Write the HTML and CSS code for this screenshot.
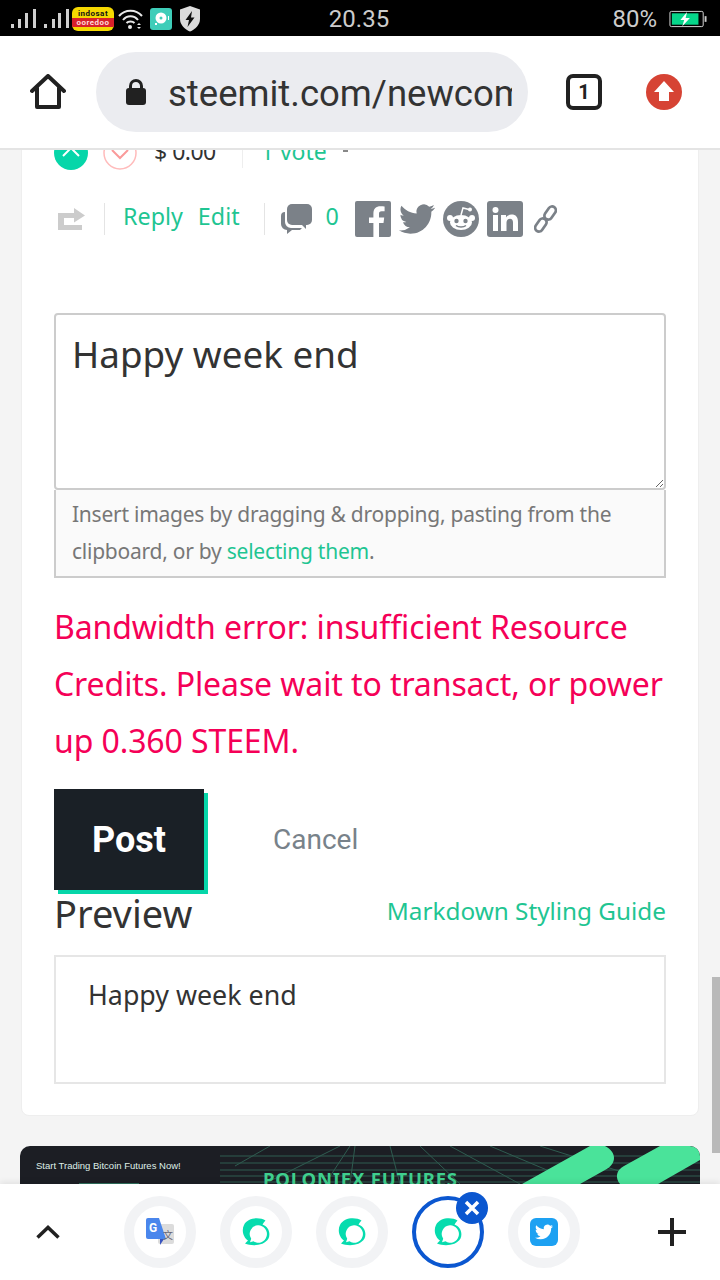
FILE: index.html
```html
<!DOCTYPE html>
<html lang="en">
<head>
    <meta charset="UTF-8">
    <meta name="viewport" content="width=device-width, initial-scale=1.0">
    <title>Steemit comment</title>
    <link rel="stylesheet" href="styles.css">
</head>
<body>
    <svg class="defs" width="0" height="0">
        <symbol id="steem" viewBox="0 0 28 28">
            <path fill="#06dcae" d="M23.500 2.500C18-1 6-1 2 7c-3 6 0 13 4 15.500L3 25.500C10 28.500 22 28 26.500 20.500C29 14.500 26 8.500 20.500 6.500C21.500 5 22.500 3.500 23.500 2.500Z"/>
            <path fill="#fff" transform="translate(.5 .8)" d="M15.500 6.500a8.700 8.700 0 1 1-4.500 16L7.500 23.500L8.700 20a8.700 8.700 0 0 1 6.800-13.500Z"/>
        </symbol>
    </svg>

    <div class="page">
        <div class="statusbar">
            <div class="status-left">
                <svg class="signal" width="62" height="19" viewBox="0 0 62 19" fill="#cfcfcf">
                    <rect x="0" y="15" width="3" height="4"/><rect x="7" y="10" width="3" height="9"/><rect x="14" y="4" width="3" height="15"/><rect x="22" y="0" width="3" height="19"/>
                    <rect x="33" y="15" width="3" height="4"/><rect x="41" y="10" width="3" height="9"/><rect x="47" y="4" width="3" height="15"/><rect x="55" y="0" width="3" height="19"/>
                </svg>
                <div class="operator">
                    <span class="op-top">indosat</span>
                    <span class="op-bottom">ooredoo</span>
                </div>
                <svg width="25" height="22" viewBox="0 0 25 22" fill="none" stroke="#e8e8e8" stroke-width="2">
                    <path d="M1 8C7 1 18 1 24 8"/><path d="M5 12C9 7 16 7 20 12"/><path d="M8.500 15C10.500 13 14.500 13 16.500 15"/>
                    <circle cx="12" cy="19" r="2" fill="#e8e8e8" stroke="none"/>
                    <path d="M21 15l2 2h-4zM21 21l2-2h-4z" fill="#e8e8e8" stroke="none"/>
                </svg>
                <svg width="22" height="22" viewBox="0 0 22 22">
                    <rect width="22" height="22" rx="3" fill="#3ecdb9"/>
                    <circle cx="11" cy="10" r="5.500" fill="#fff"/>
                    <circle cx="11" cy="10" r="1.500" fill="#3ecdb9"/>
                    <rect x="5" y="15" width="2" height="2" fill="#fff"/>
                    <rect x="18" y="8" width="1" height="4" fill="#fff"/>
                </svg>
                <svg width="22" height="26" viewBox="0 0 22 26">
                    <path fill="#dcdcdc" d="M11 0L21 3.500V13C21 19 16 23.500 11 25.500C6 23.500 1 19 1 13V3.500Z"/>
                    <path fill="#111" d="M13 5L6.500 14H10L8.500 21L15.500 11.500H12Z"/>
                </svg>
            </div>
            <div class="status-time">20.35</div>
            <div class="status-right">
                <span class="battery-text">80%</span>
                <svg width="38" height="18" viewBox="0 0 40 18">
                    <rect x="1" y="1" width="35" height="16" rx="1.500" fill="none" stroke="#ddd"/>
                    <rect x="3" y="3" width="28" height="12" fill="#06d68a"/>
                    <rect x="37.500" y="6" width="2" height="6" fill="#ccc"/>
                    <path fill="#fff" d="M19 1.500L12 10H16L14 16.500L22 8H17.500Z"/>
                </svg>
            </div>
        </div>

        <div class="toolbar">
            <svg class="tool-icon" width="36" height="36" viewBox="0 0 36 36" fill="none" stroke="#212121" stroke-width="4" stroke-linejoin="round" stroke-linecap="round">
                <path d="M2 17L18 2L34 17"/>
                <path d="M7 14V33H29V14"/>
            </svg>
            <div class="omnibox">
                <svg width="20" height="26" viewBox="0 0 20 26">
                    <path fill="none" stroke="#212121" stroke-width="3" d="M4.500 11V7a5.500 5.500 0 0 1 11 0v4"/>
                    <rect y="9" width="20" height="17" rx="3" fill="#212121"/>
                </svg>
                <div class="url">steemit.com/newcomer</div>
            </div>
            <div class="tab-count">1</div>
            <svg class="tool-icon" width="36" height="36" viewBox="0 0 36 36">
                <circle cx="18" cy="18" r="18" fill="#d64334"/>
                <path fill="#fff" d="M18 7L28 18H23V27H13V18H8Z"/>
            </svg>
        </div>

        <div class="main">
            <div class="card">
                <div class="vote-row">
                    <svg width="34" height="34" viewBox="0 0 34 34">
                        <circle cx="17" cy="17" r="17" fill="#06d6a9"/>
                        <path d="M9 20L17 12L25 20" fill="none" stroke="#fff" stroke-width="2"/>
                    </svg>
                    <svg class="vote-down" width="34" height="34" viewBox="0 0 34 34">
                        <circle cx="17" cy="17" r="16" fill="#fff" stroke="#fbb" stroke-width="1.500"/>
                        <path d="M9 14L17 22L25 14" fill="none" stroke="#fa9a9a" stroke-width="2"/>
                    </svg>
                    <span class="payout">$ 0.00</span>
                    <span class="vote-line"></span>
                    <span class="votes">1 vote</span>
                    <span class="caret"></span>
                </div>

                <div class="action-row">
                    <svg class="retweet" width="28" height="22" viewBox="0 0 28 22" fill="#ccc">
                        <path d="M0 5H16V0L27 7.500L16 14.500V10H6V17H24V22H0Z"/>
                    </svg>
                    <span class="sep sep-one"></span>
                    <a class="link reply">Reply</a>
                    <a class="link edit">Edit</a>
                    <span class="sep sep-two"></span>
                    <svg width="32" height="30" viewBox="0 0 32 30" fill="#7b8188">
                        <rect x="6" y="0" width="25" height="21" rx="5"/>
                        <path d="M20 20L25 25V20Z"/>
                        <path d="M4 8v10a6 6 0 0 0 6 6h11l-2 2h-8l-5 4v-4a6 6 0 0 1-6-6v-8a4 4 0 0 1 4-4Z"/>
                    </svg>
                    <span class="link count">0</span>
                    <div class="share">
                        <svg width="36" height="36" viewBox="0 0 36 36">
                            <rect width="36" height="36" rx="2" fill="#7b8188"/>
                            <path fill="#fff" d="M24 36V22h4.500l.7-5.500H24V13c0-1.600.5-2.700 2.700-2.700h2.900V5.400c-.5 0-2.200-.2-4.200-.2-4.200 0-7 2.500-7 7.200v4.100H14V22h4.400v14z"/>
                        </svg>
                        <svg width="36" height="36" viewBox="0 0 24 24" fill="#7b8188">
                            <path d="M23.953 4.570a10 10 0 01-2.825.775 4.958 4.958 0 002.163-2.723c-.951.555-2.005.959-3.127 1.184a4.920 4.920 0 00-8.384 4.482C7.690 8.095 4.067 6.130 1.640 3.162a4.822 4.822 0 00-.666 2.475c0 1.710.870 3.213 2.188 4.096a4.904 4.904 0 01-2.228-.616v.060a4.923 4.923 0 003.946 4.827 4.996 4.996 0 01-2.212.085 4.936 4.936 0 004.604 3.417 9.867 9.867 0 01-6.102 2.105c-.390 0-.779-.023-1.170-.067a13.995 13.995 0 007.557 2.209c9.053 0 13.998-7.496 13.998-13.985 0-.210 0-.420-.015-.630A9.935 9.935 0 0024 4.590z"/>
                        </svg>
                        <svg width="36" height="36" viewBox="0 0 36 36">
                            <circle cx="18" cy="18" r="18" fill="#7b8188"/>
                            <ellipse cx="18" cy="21.500" rx="11" ry="7.500" fill="#fff"/>
                            <circle cx="7" cy="17" r="3" fill="#fff"/>
                            <circle cx="29" cy="17" r="3" fill="#fff"/>
                            <path d="M18 14L20 7L26 8.500" fill="none" stroke="#fff" stroke-width="1.500"/>
                            <circle cx="27" cy="8.500" r="2" fill="#fff"/>
                            <circle cx="13.500" cy="20" r="2.200" fill="#7b8188"/>
                            <circle cx="22.500" cy="20" r="2.200" fill="#7b8188"/>
                            <path d="M13 24.500C15.500 26.500 20.500 26.500 23 24.500" fill="none" stroke="#7b8188" stroke-width="1.500"/>
                        </svg>
                        <svg width="36" height="36" viewBox="0 0 36 36">
                            <rect width="36" height="36" rx="3" fill="#7b8188"/>
                            <circle cx="8.500" cy="9" r="3" fill="#fff"/>
                            <rect x="6" y="14" width="5" height="16" fill="#fff"/>
                            <path fill="#fff" d="M14 14h5v2.500c1-1.800 3-3 5.500-3c4.500 0 6.500 2.500 6.500 7.500v9h-5v-8.500c0-2.500-1-3.800-3-3.800s-3.500 1.400-3.500 3.800V30h-5.500Z"/>
                        </svg>
                        <svg class="chain" width="23" height="28" viewBox="0 0 24 28" fill="none" stroke="#7b8188" stroke-width="2.800">
                            <rect x="-4" y="-9" width="8" height="15" rx="4" transform="translate(16 9) rotate(35)"/>
                            <rect x="-4" y="-6" width="8" height="15" rx="4" transform="translate(8 19) rotate(35)"/>
                        </svg>
                    </div>
                </div>

                <textarea class="editor">Happy week end</textarea>
                <div class="dropzone">
                    Insert images by dragging &amp; dropping, pasting from the clipboard, or by <a class="link">selecting them</a>.
                </div>

                <div class="error">Bandwidth error: insufficient Resource Credits. Please wait to transact, or power up 0.360 STEEM.</div>

                <div class="buttons">
                    <button class="post">Post</button>
                    <button class="cancel">Cancel</button>
                </div>

                <div class="preview-head">
                    <h4>Preview</h4>
                    <a class="link guide">Markdown Styling Guide</a>
                </div>
                <div class="preview-box">Happy week end</div>
            </div>

            <div class="banner">
                <svg class="banner-art" width="680" height="100" viewBox="0 0 680 100">
                    <g stroke="#2f5c50" stroke-width="1" fill="none">
                        <path d="M215 20L250 0M250 35L320 0M305 38L330 0M330 38L335 0M380 38L370 0M440 38L400 0M500 38L430 0M560 38L470 0M640 38L520 0"/>
                        <path d="M200 10H680M200 17H680M200 24H680M200 30H680M200 36H680"/>
                    </g>
                    <path fill="#4ae39a" d="M502 38L570 0H585C597 6 597 18 585 24L560 38Z"/>
                    <path fill="#4ae39a" d="M600 38C595 32 596 24 604 20L640 0H670Q680 0 680 10V14L638 38Z"/>
                </svg>
                <div class="banner-text">Start Trading Bitcoin Futures Now!</div>
                <div class="banner-title">POLONIEX FUTURES</div>
                <div class="banner-btn"></div>
            </div>

            <div class="scrollbar"></div>
        </div>

        <div class="tabbar">
            <svg class="bar-icon" width="24" height="14" viewBox="0 0 24 14">
                <path d="M1.500 12.500L12 2.500L22.500 12.500" fill="none" stroke="#212121" stroke-width="3.500"/>
            </svg>
            <div class="bubbles">
                <div class="bubble">
                    <svg width="28" height="28" viewBox="0 0 28 28">
                        <rect x="12" y="6" width="16" height="20" rx="2" fill="#dcdcdc"/>
                        <path d="M0 2a2 2 0 0 1 2-2h11l7 21h-18a2 2 0 0 1-2-2Z" fill="#4a86ec"/>
                        <path d="M14 21l4 0l-4 6Z" fill="#3a55c0"/>
                        <text class="g-letter" x="3" y="14">G</text>
                        <text class="g-cjk" x="17" y="21">文</text>
                    </svg>
                </div>
                <div class="bubble"><svg width="28" height="28"><use href="#steem"/></svg></div>
                <div class="bubble"><svg width="28" height="28"><use href="#steem"/></svg></div>
                <div class="bubble bubble-active">
                    <svg width="28" height="28"><use href="#steem"/></svg>
                    <span class="bubble-close">
                        <svg width="16" height="16" viewBox="0 0 16 16"><path d="M2 2L14 14M14 2L2 14" stroke="#fff" stroke-width="3.500"/></svg>
                    </span>
                </div>
                <div class="bubble">
                    <svg width="28" height="28" viewBox="0 0 28 28">
                        <rect width="28" height="28" rx="6" fill="#1da1f2"/>
                        <path fill="#fff" transform="translate(5 5) scale(.75)" d="M23.953 4.570a10 10 0 01-2.825.775 4.958 4.958 0 002.163-2.723c-.951.555-2.005.959-3.127 1.184a4.920 4.920 0 00-8.384 4.482C7.690 8.095 4.067 6.130 1.640 3.162a4.822 4.822 0 00-.666 2.475c0 1.710.870 3.213 2.188 4.096a4.904 4.904 0 01-2.228-.616v.060a4.923 4.923 0 003.946 4.827 4.996 4.996 0 01-2.212.085 4.936 4.936 0 004.604 3.417 9.867 9.867 0 01-6.102 2.105c-.390 0-.779-.023-1.170-.067a13.995 13.995 0 007.557 2.209c9.053 0 13.998-7.496 13.998-13.985 0-.210 0-.420-.015-.630A9.935 9.935 0 0024 4.590z"/>
                    </svg>
                </div>
            </div>
            <svg class="bar-icon" width="28" height="28" viewBox="0 0 28 28">
                <path d="M14 0V28M0 14H28" stroke="#212121" stroke-width="4"/>
            </svg>
        </div>
    </div>
</body>
</html>
```

FILE: styles.css
```css
* {
    box-sizing: border-box;
}
body {
    margin: 0;
    font-family: "Noto Sans", sans-serif;
    color: #333;
}
a {
    text-decoration: none;
}
.defs {
    display: block;
    height: 0;
}
.page {
    width: 720px;
    height: 1280px;
    display: flex;
    flex-direction: column;
    overflow: hidden;
    background: #f4f4f4;
}

/* status bar */
.statusbar {
    height: 36px;
    flex: none;
    background: #000;
    color: #ccc;
    font-family: Roboto, sans-serif;
    display: grid;
    grid-template-columns: 1fr auto 1fr;
    align-items: center;
    padding: 1px 13px 0 11px;
}
.status-left {
    display: flex;
    align-items: center;
    gap: 7px;
}
.signal {
    margin-right: -8px;
}
.operator {
    width: 42px;
    height: 24px;
    margin-right: -3px;
    padding-bottom: 2px;
    background: #f5d800;
    border-radius: 6px;
    display: flex;
    flex-direction: column;
    align-items: center;
    justify-content: center;
    font-size: 8px;
    line-height: 9px;
    font-weight: 700;
    overflow: hidden;
}
.op-top {
    color: #111;
    letter-spacing: 0.5px;
}
.op-bottom {
    color: #ffd9d9;
    background: #d8202a;
    width: 100%;
    text-align: center;
    letter-spacing: 0.5px;
}
.status-time {
    font-size: 24px;
}
.status-right {
    display: flex;
    justify-content: flex-end;
    align-items: center;
    gap: 12px;
}
.battery-text {
    font-size: 24px;
}

/* browser toolbar */
.toolbar {
    height: 114px;
    flex: none;
    background: #fff;
    border-bottom: 2px solid #e4e4e4;
    display: flex;
    align-items: center;
    padding: 0 38px 0 30px;
    position: relative;
    z-index: 2;
}
.omnibox {
    width: 432px;
    height: 80px;
    margin: 0 38px 0 30px;
    padding: 0 16px 0 30px;
    background: #ebecf0;
    border-radius: 40px;
    display: flex;
    align-items: center;
    gap: 22px;
}
.url {
    padding-top: 2px;
    font-family: Roboto, sans-serif;
    font-size: 36.500px;
    color: #333;
    white-space: nowrap;
    overflow: hidden;
    flex: 1;
}
.tab-count {
    width: 36px;
    height: 36px;
    margin-right: 44px;
    border: 4px solid #212121;
    border-radius: 7px;
    font-family: Roboto, sans-serif;
    font-weight: 700;
    font-size: 20px;
    color: #212121;
    display: flex;
    align-items: center;
    justify-content: center;
}

/* page content */
.main {
    flex: 1;
    min-height: 0;
    overflow: hidden;
    padding: 0 21px;
    position: relative;
}
.card {
    width: 678px;
    height: 997px;
    margin-top: -31px;
    padding: 16px 32px 0;
    background: #fff;
    border: 1px solid #eee;
    border-radius: 8px;
}
.vote-row {
    height: 34px;
    display: flex;
    align-items: center;
    font-size: 23px;
}
.vote-down {
    margin-left: 15px;
}
.payout {
    margin-left: 17px;
    padding-bottom: 5px;
    letter-spacing: -0.5px;
}
.vote-line {
    width: 1px;
    height: 30px;
    margin: 0 18px 0 26px;
    background: #eee;
}
.votes {
    padding-bottom: 5px;
    color: #1fc592;
}
.caret {
    align-self: flex-start;
    width: 5px;
    height: 2px;
    margin: 14px 0 0 16px;
    background: #888;
}
.action-row {
    height: 36px;
    margin-top: 31px;
    display: flex;
    align-items: center;
    padding-left: 4px;
}
.link {
    color: #1fc592;
}
.sep {
    width: 1px;
    height: 32px;
    background: #e4e4e4;
}
.sep-one {
    margin: 0 18px;
}
.sep-two {
    margin: 0 16px 0 24px;
}
.reply,
.edit,
.count {
    font-size: 23.300px;
    padding-bottom: 6px;
}
.edit {
    margin-left: 15px;
}
.count {
    margin-left: 13px;
}
.share {
    display: flex;
    align-items: center;
    gap: 8px;
    margin-left: 16px;
}
.chain {
    margin-left: 3px;
}
.editor {
    display: block;
    width: 612px;
    height: 177px;
    margin-top: 76px;
    padding: 14px 16px;
    border: 2px solid #ccc;
    border-radius: 4px;
    font-family: "Noto Sans", sans-serif;
    font-size: 36.800px;
    line-height: 50px;
    color: #333;
    outline: none;
}
.dropzone {
    width: 612px;
    height: 88px;
    padding: 6px 16px 0;
    background: #fafafa;
    border: 2px solid #ccc;
    border-top: none;
    font-size: 21px;
    letter-spacing: -0.25px;
    line-height: 37px;
    color: #777;
}
.error {
    margin-top: 20px;
    font-size: 32px;
    letter-spacing: -0.1px;
    line-height: 57px;
    color: #f50057;
}
.buttons {
    display: flex;
    align-items: center;
    margin-top: 20px;
}
.post {
    width: 150px;
    height: 101px;
    border: none;
    background: #1a2026;
    box-shadow: 4px 4px 0 #06d6a9;
    color: #fff;
    font-family: Roboto, sans-serif;
    font-weight: 700;
    font-size: 36px;
}
.cancel {
    margin-left: 69px;
    padding: 0;
    border: none;
    background: none;
    color: #78828a;
    font-family: Roboto, sans-serif;
    font-size: 28px;
}
.preview-head {
    display: flex;
    justify-content: space-between;
    align-items: center;
    height: 50px;
}
.preview-head h4 {
    margin: 0 0 4px;
    font-size: 38px;
    font-weight: 400;
}
.guide {
    font-size: 24.300px;
    margin-bottom: 10px;
}
.preview-box {
    width: 612px;
    height: 129px;
    margin-top: 15px;
    padding: 16px 32px;
    border: 2px solid #e6e6e6;
    font-size: 26.800px;
    line-height: 44px;
}

/* ad under the card */
.banner {
    width: 680px;
    height: 100px;
    margin: 30px 0 0 -1px;
    background: #1c1e24;
    border-radius: 10px 10px 0 0;
    position: relative;
    overflow: hidden;
}
.banner-art {
    position: absolute;
    left: 0;
    top: 0;
}
.banner-text {
    position: absolute;
    left: 16px;
    top: 14px;
    font-family: "Liberation Sans", sans-serif;
    font-size: 9.500px;
    color: #dfeee8;
}
.banner-title {
    position: absolute;
    left: 243px;
    top: 20px;
    font-family: "Noto Sans", sans-serif;
    font-weight: 700;
    font-size: 18.500px;
    letter-spacing: 0.8px;
    color: #3fcf8e;
}
.banner-btn {
    position: absolute;
    left: 59px;
    top: 37px;
    width: 60px;
    height: 4px;
    background: #2f6f5c;
}
.scrollbar {
    position: absolute;
    right: 0;
    top: 827px;
    width: 8px;
    height: 176px;
    background: #b9b9b9;
}

/* bottom bubble bar */
.tabbar {
    height: 96px;
    flex: none;
    background: #fff;
    display: flex;
    align-items: center;
    padding-left: 36px;
    position: relative;
    z-index: 2;
    box-shadow: 0 -2px 6px rgba(0, 0, 0, 0.08);
}
.bar-icon {
    flex: none;
}
.bubbles {
    display: flex;
    gap: 24px;
    margin: 0 78px 0 64px;
}
.bubble {
    width: 72px;
    height: 72px;
    border: 10px solid #f2f3f5;
    border-radius: 50%;
    display: flex;
    align-items: center;
    justify-content: center;
    position: relative;
}
.bubble-active {
    border: 4px solid #0b57d0;
}
.bubble-close {
    position: absolute;
    top: -8px;
    right: -8px;
    width: 32px;
    height: 32px;
    background: #0b57d0;
    border-radius: 50%;
    display: flex;
    align-items: center;
    justify-content: center;
}
.g-letter {
    font-family: Roboto, sans-serif;
    font-weight: 700;
    font-size: 12px;
    fill: #fff;
}
.g-cjk {
    font-family: "Noto Sans CJK SC", sans-serif;
    font-size: 10px;
    fill: #667;
}
```
